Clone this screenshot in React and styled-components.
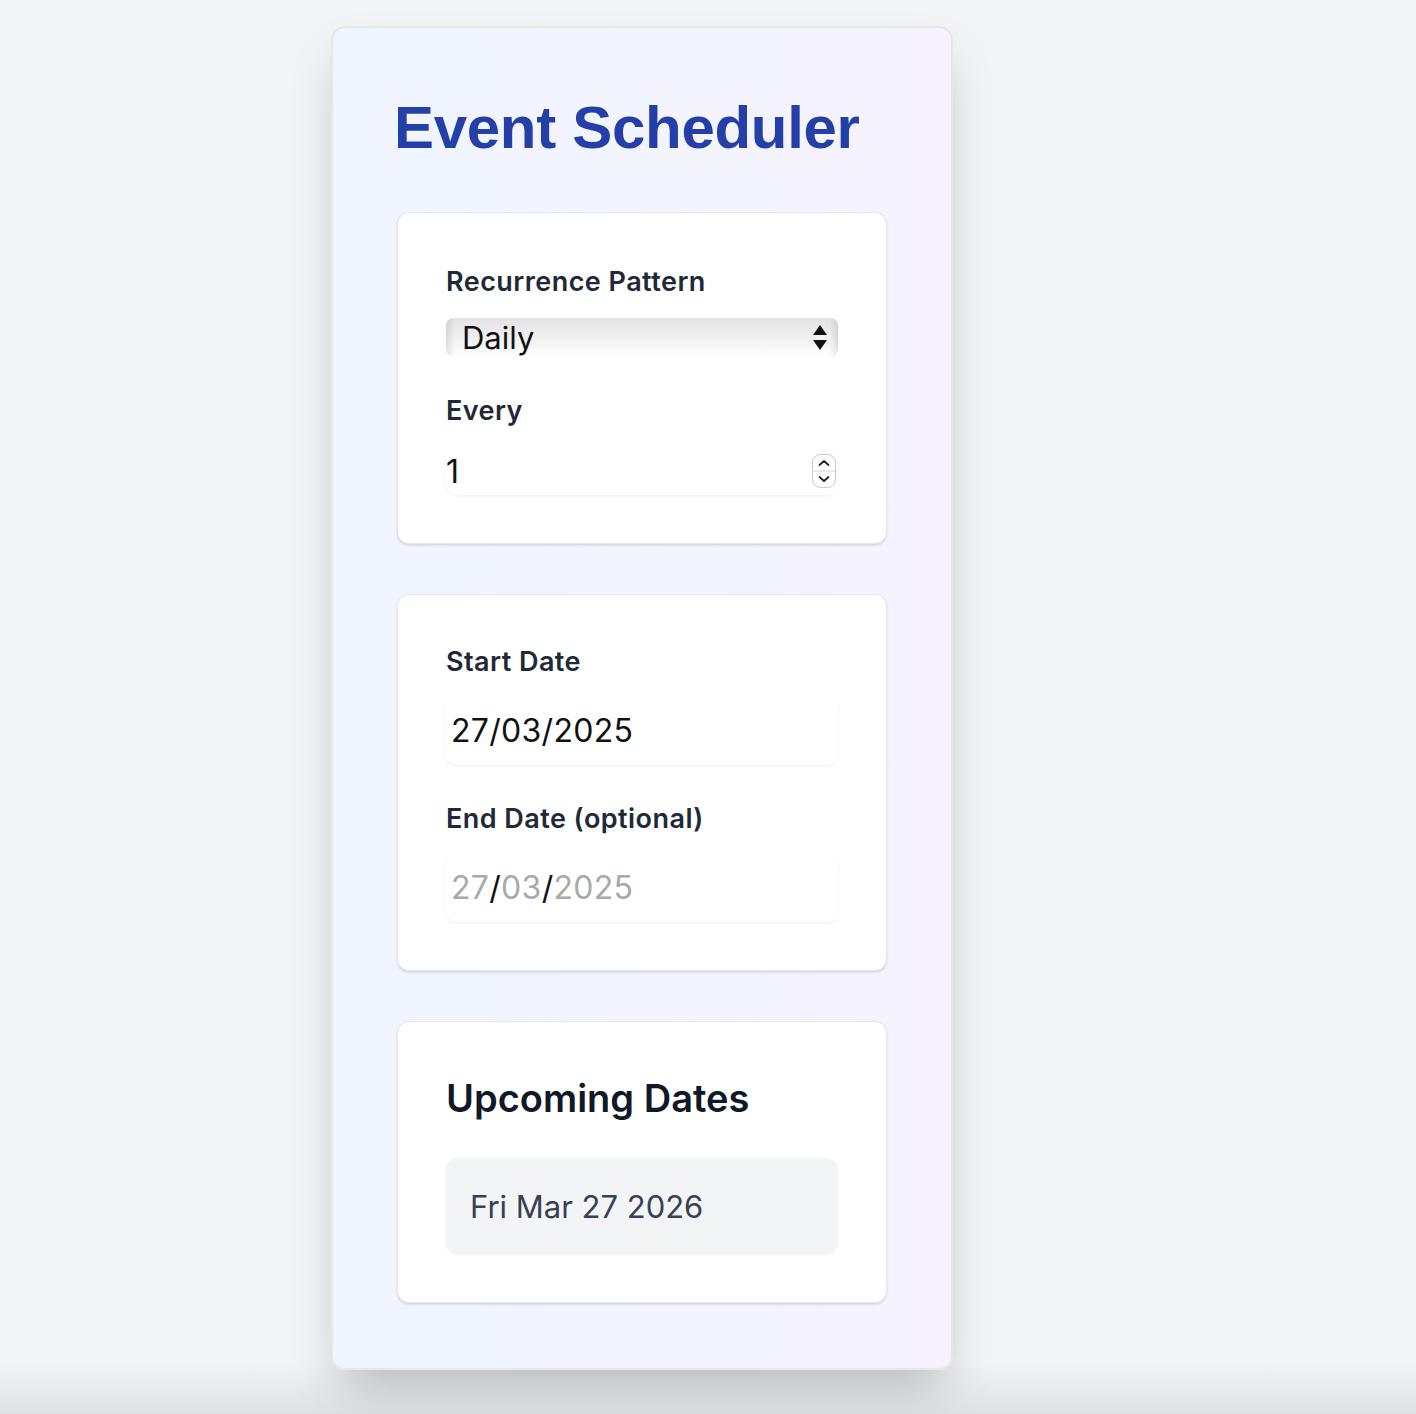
import React from 'react'
import styled, { createGlobalStyle } from 'styled-components'

const GlobalStyle = createGlobalStyle`
  html, body {
    margin: 0;
    padding: 0;
  }
  body {
    min-height: 1414px;
    background: linear-gradient(to bottom, #f3f4f6 0, #f3f4f6 1360px, #dfe0e2 1414px);
    font-family: Inter, "Noto Sans", sans-serif;
  }
`;

const App = () => {
  return (
    <Page>
      <GlobalStyle />
      <Shell>
        <Title>Event Scheduler</Title>

        <Card $top={53}>
          <Field>
            <Label>Recurrence Pattern</Label>
            <Select>
              <span>Daily</span>
              <svg width="16" height="30" viewBox="0 0 16 30">
                <path d="M8 2 L15 12 L1 12 Z" fill="#111" />
                <path d="M1 17 L15 17 L8 27 Z" fill="#111" />
              </svg>
            </Select>
          </Field>
          <Field>
            <Label>Every</Label>
            <NumberBox>
              <span>1</span>
              <Spinner>
                <svg width="24" height="34" viewBox="0 0 24 34">
                  <rect x="0.5" y="0.5" width="23" height="33" rx="8" fill="#fff" stroke="#c8c8c8" />
                  <line x1="1" y1="17" x2="23" y2="17" stroke="#d4d4d4" />
                  <path d="M7.5 11 L12 7 L16.5 11" fill="none" stroke="#222" strokeWidth="1.8" strokeLinecap="round" strokeLinejoin="round" />
                  <path d="M7.5 23 L12 27 L16.5 23" fill="none" stroke="#222" strokeWidth="1.8" strokeLinecap="round" strokeLinejoin="round" />
                </svg>
              </Spinner>
            </NumberBox>
          </Field>
        </Card>

        <Card $top={51}>
          <Field>
            <Label>Start Date</Label>
            <DateBox>27/03/2025</DateBox>
          </Field>
          <Field>
            <Label>End Date (optional)</Label>
            <DateBox>
              <Faded>27</Faded>/<Faded>03</Faded>/<Faded>2025</Faded>
            </DateBox>
          </Field>
        </Card>

        <Card $top={52} $gap={36}>
          <Heading>Upcoming Dates</Heading>
          <DateItem>Fri Mar 27 2026</DateItem>
        </Card>
      </Shell>
    </Page>
  )
}

//STYLED COMPONENTS
const Page = styled.div`
  padding: 26px 0 44px 331px;
`;

const Shell = styled.main`
  width: 622px;
  box-sizing: border-box;
  padding: 62px 64px 65px;
  border: 2px solid #e5e7eb;
  border-radius: 14px;
  background: linear-gradient(to right, #eff5ff, #f6f3fd);
  box-shadow: 0 25px 50px -12px rgba(0, 0, 0, 0.25);
  display: flex;
  flex-direction: column;
  gap: 50px;
`;

const Title = styled.h1`
  margin: 0 0 -4px -3px;
  font-family: "Liberation Sans", Arial, sans-serif;
  font-size: 60px;
  line-height: 76px;
  font-weight: 700;
  color: #253fa9;
  letter-spacing: -0.3px;
`;

const Card = styled.section`
  background: #fff;
  border: 1px solid #e5e7eb;
  border-radius: 12px;
  box-shadow: 0 2px 3px rgba(0, 0, 0, 0.08), 0 1px 2px rgba(0, 0, 0, 0.06);
  padding: ${p => p.$top}px 48px 48px;
  display: flex;
  flex-direction: column;
  gap: ${p => p.$gap || 38}px;
`;

const Field = styled.div`
  display: flex;
  flex-direction: column;
  gap: 20px;
`;

const Label = styled.label`
  font-size: 27px;
  line-height: 32px;
  font-weight: 600;
  letter-spacing: 0.45px;
  color: #1f2937;
`;

const Select = styled.div`
  height: 39px;
  box-sizing: border-box;
  border-radius: 8px;
  padding: 0 10px 0 16px;
  display: flex;
  align-items: center;
  justify-content: space-between;
  font-size: 31px;
  color: #111;
  background:
    linear-gradient(to right, rgba(0,0,0,0.1), rgba(0,0,0,0) 8px, rgba(0,0,0,0) calc(100% - 8px), rgba(0,0,0,0.1)),
    linear-gradient(to bottom, #e3e3e3 0%, #eeeeee 45%, #ffffff 100%);
`;

const NumberBox = styled.div`
  height: 48px;
  border-radius: 10px;
  box-shadow: 0 1px 3px rgba(0, 0, 0, 0.06);
  display: flex;
  align-items: center;
  justify-content: space-between;
  padding-right: 2px;
  font-size: 32px;
  color: #111;
`;

const Spinner = styled.span`
  display: flex;
`;

const DateBox = styled.div`
  height: 67px;
  box-sizing: border-box;
  border-radius: 10px;
  box-shadow: 0 1px 3px rgba(0, 0, 0, 0.07);
  padding: 0 5px 2px;
  display: flex;
  align-items: center;
  font-size: 32px;
  letter-spacing: 0.3px;
  color: #111;
`;

const Faded = styled.span`
  color: #a9a9a9;
`;

const Heading = styled.h2`
  margin: 0;
  font-size: 38px;
  line-height: 48px;
  font-weight: 600;
  color: #111827;
`;

const DateItem = styled.div`
  height: 96px;
  box-sizing: border-box;
  border-radius: 12px;
  background: #f3f4f6;
  box-shadow: 0 1px 3px rgba(0, 0, 0, 0.05);
  padding: 0 24px;
  display: flex;
  align-items: center;
  font-size: 31px;
  color: #374151;
`;

export default App
